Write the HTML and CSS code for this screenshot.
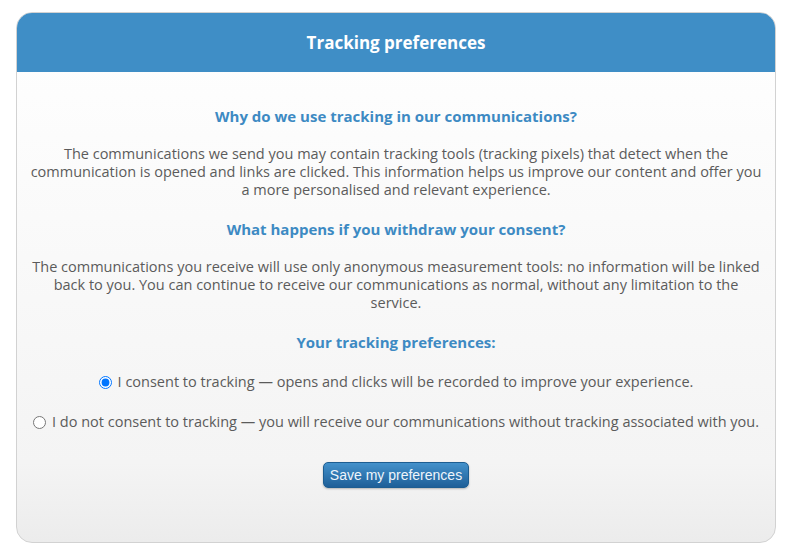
FILE: index.html
```html
<!DOCTYPE html>
<html lang="en">
<head>
    <meta charset="UTF-8">
    <title>Tracking preferences</title>
    <link rel="stylesheet" href="styles.css">
</head>
<body>
    <div class="card">
        <div class="card-header">Tracking preferences</div>
        <div class="card-body">
            <h2>Why do we use tracking in our communications?</h2>
            <p>The communications we send you may contain tracking tools (tracking pixels) that detect when the communication is opened and links are clicked. This information helps us improve our content and offer you a more personalised and relevant experience.</p>

            <h2>What happens if you withdraw your consent?</h2>
            <p>The communications you receive will use only anonymous measurement tools: no information will be linked back to you. You can continue to receive our communications as normal, without any limitation to the service.</p>

            <h2>Your tracking preferences:</h2>
            <div class="choices">
                <label><input type="radio" name="tracking" value="yes" checked> I consent to tracking — opens and clicks will be recorded to improve your experience.</label>
                <label><input type="radio" name="tracking" value="no"> I do not consent to tracking — you will receive our communications without tracking associated with you.</label>
            </div>

            <button class="button" type="button">Save my preferences</button>
        </div>
    </div>
</body>
</html>
```

FILE: styles.css
```css
body {
    margin: 0;
    padding: 12px 20px 0 16px;
    background: #fff;
    font-family: "Open Sans", "DejaVu Sans", sans-serif;
    color: #5b5b5b;
}

.card {
    width: 758px;
    border: 1px solid #d2d2d2;
    border-radius: 16px;
    overflow: hidden;
    background: linear-gradient(to bottom, #ffffff 0%, #f4f4f4 85%, #ececec 100%);
}

.card-header {
    height: 59px;
    line-height: 59px;
    background-color: #3f8ec6;
    color: #fff;
    text-align: center;
    font-size: 17px;
    font-weight: bold;
}

.card-body {
    display: flex;
    flex-direction: column;
    align-items: center;
    padding: 34px 12px 54px;
    text-align: center;
}

h2 {
    margin: 0 0 19px;
    font-size: 15px;
    line-height: 20px;
    color: #3d8ac3;
    font-weight: bold;
}

p {
    margin: 0 0 20px;
    font-size: 14.5px;
    line-height: 18px;
}

.choices {
    display: flex;
    flex-direction: column;
    align-items: center;
    gap: 22px;
    margin: 2px 0 31px;
}

.choices label {
    display: flex;
    align-items: center;
    gap: 6px;
    font-size: 14.5px;
    line-height: 18px;
    cursor: pointer;
}

.choices input {
    margin: 0;
    width: 13px;
    height: 13px;
}

.button {
    height: 26px;
    padding: 0 6px;
    border: 1px solid #1d5d91;
    border-radius: 5px;
    background: linear-gradient(to bottom, #4391cb, #1e5f98);
    color: #eef5fb;
    font-family: "Liberation Sans", Arial, sans-serif;
    font-size: 14px;
    cursor: pointer;
    box-shadow: 0 1px 2px rgba(0, 0, 0, 0.25);
}
```
